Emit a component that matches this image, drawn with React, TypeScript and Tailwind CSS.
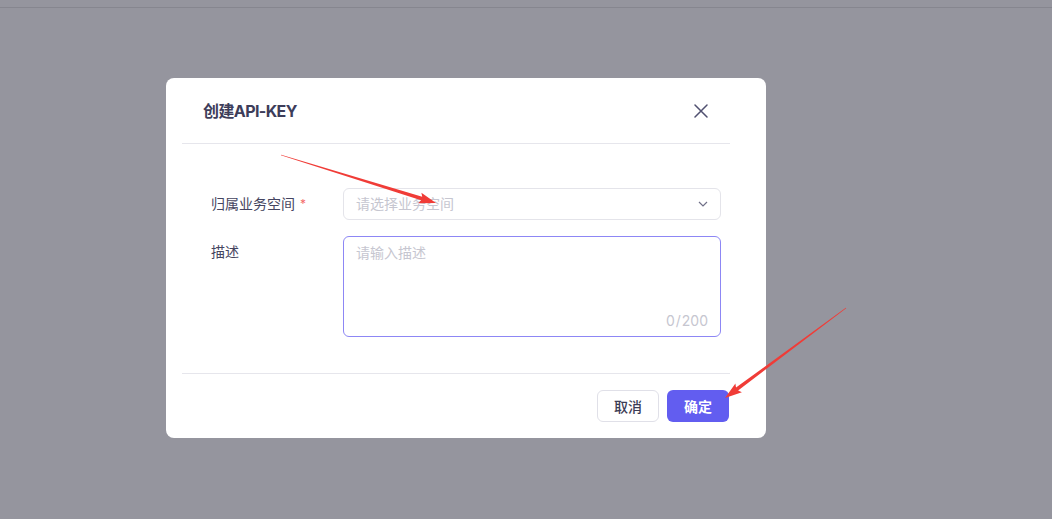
import React from "react";

function arrowPoints(tx: number, ty: number, hx: number, hy: number) {
  const dx = hx - tx;
  const dy = hy - ty;
  const len = Math.sqrt(dx * dx + dy * dy);
  const ux = dx / len;
  const uy = dy / len;
  const nx = -uy;
  const ny = ux;
  const L = 15;
  const W = 5.5;
  const bx = hx - ux * L;
  const by = hy - uy * L;
  const pts: [number, number][] = [
    [tx + nx * 0.3, ty + ny * 0.3],
    [bx + nx * 1.8, by + ny * 1.8],
    [bx - ux * 2 + nx * W, by - uy * 2 + ny * W],
    [hx, hy],
    [bx - ux * 2 - nx * W, by - uy * 2 - ny * W],
    [bx - nx * 1.8, by - ny * 1.8],
    [tx - nx * 0.3, ty - ny * 0.3],
  ];
  return pts.map((p) => `${p[0].toFixed(1)},${p[1].toFixed(1)}`).join(" ");
}

export default function App() {
  const font = {
    fontFamily: '"Inter", "Noto Sans CJK SC", "Noto Sans", sans-serif',
  };
  return (
    <div
      className="relative w-[1052px] h-[519px] overflow-hidden bg-[#95959e] flex flex-col"
      style={font}
    >
      <div className="h-[7px] shrink-0" />
      <div className="h-px bg-[#86868f] shrink-0" />
      <div className="pl-[166px] pt-[70px]">
        <div className="w-[600px] h-[360px] bg-white rounded-[8px] flex flex-col">
          <div className="h-[65px] flex items-center justify-between pl-[37px] pr-[58px] pt-[1px]">
            <div className="text-[16px] leading-[22px] font-bold text-[#3d3d5a] tracking-[-0.6px]">
              创建API-KEY
            </div>
            <svg width="14" height="14" viewBox="0 0 14 14">
              <path
                d="M1 1 L13 13 M13 1 L1 13"
                stroke="#505070"
                strokeWidth="1.5"
                strokeLinecap="round"
              />
            </svg>
          </div>
          <div className="ml-[16px] mr-[36px] h-px bg-[#e6e6ec]" />
          <div className="pl-[45px] pr-[45px] pt-[44px] flex flex-col gap-[16px]">
            <div className="flex items-center">
              <div className="w-[132px] flex items-center text-[14px] leading-[20px] text-[#454560]">
                归属业务空间
                <span className="ml-[5px] text-[12px] text-[#f46a6a]">*</span>
              </div>
              <div className="w-[378px] h-[32px] border border-[#e4e4ea] rounded-[6px] flex items-center justify-between pl-[12px] pr-[12px]">
                <span className="text-[14px] leading-[20px] text-[#c6c6d0]">
                  请选择业务空间
                </span>
                <svg width="10" height="6" viewBox="0 0 10 6">
                  <path
                    d="M1 1 L5 5 L9 1"
                    stroke="#707088"
                    strokeWidth="1.2"
                    fill="none"
                  />
                </svg>
              </div>
            </div>
            <div className="flex items-start">
              <div className="w-[132px] pt-[6px] text-[14px] leading-[20px] text-[#454560]">
                描述
              </div>
              <div className="w-[378px] h-[101px] border border-[#8d87f5] rounded-[6px] flex flex-col justify-between pl-[12px] pr-[12px] pt-[5px] pb-[4px]">
                <span className="text-[14px] leading-[22px] text-[#c6c6d0]">
                  请输入描述
                </span>
                <span className="self-end flex gap-[1px] text-[14px] leading-[22px] text-[#c6c6d0]">
                  <span>0</span>
                  <span>/</span>
                  <span>200</span>
                </span>
              </div>
            </div>
          </div>
          <div className="mt-auto ml-[16px] mr-[36px] h-px bg-[#e6e6ec]" />
          <div className="h-[64px] flex items-center justify-end gap-[8px] pr-[37px]">
            <button className="w-[62px] h-[32px] rounded-[6px] border border-[#e0e0e8] bg-white text-[14px] font-medium text-[#3c3c55]">
              取消
            </button>
            <button className="w-[62px] h-[32px] rounded-[6px] bg-[#625df0] text-[14px] font-bold text-white">
              确定
            </button>
          </div>
        </div>
      </div>
      <svg
        className="absolute left-0 top-0 pointer-events-none"
        width="1052"
        height="519"
      >
        <polygon points={arrowPoints(281, 155, 436, 203)} fill="#f03c37" />
        <polygon points={arrowPoints(846, 308, 725, 398)} fill="#f03c37" />
      </svg>
    </div>
  );
}
